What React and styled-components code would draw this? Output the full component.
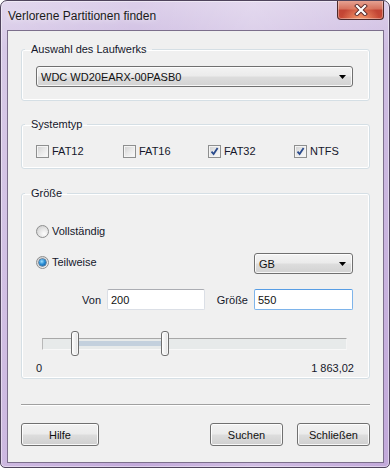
import React from 'react';
import styled, { createGlobalStyle } from 'styled-components';

const GlobalStyle = createGlobalStyle`
  html, body {
    margin: 0;
    padding: 0;
    background: #ffffff;
  }
  body {
    font-family: "Liberation Sans", Arial, sans-serif;
    font-size: 11px;
    color: #15172b;
  }
`;

const Window = styled.div`
  width: 390px;
  height: 468px;
  box-sizing: border-box;
  border: 1px solid #4f445c;
  border-radius: 7px 7px 5px 5px;
  background:
    linear-gradient(90deg, rgba(255,255,255,0.18) 0%, rgba(255,255,255,0) 35%, rgba(255,255,255,0.22) 65%, rgba(255,255,255,0) 100%),
    linear-gradient(180deg, #dccfea 0%, #cfbee2 10%, #c2a9da 100%);
  box-shadow: inset 0 0 0 1px rgba(255, 255, 255, 0.45);
  display: flex;
  flex-direction: column;
  overflow: hidden;
`;

const TitleBar = styled.div`
  height: 29px;
  flex-shrink: 0;
  display: flex;
  align-items: center;
  justify-content: space-between;
  padding-left: 7px;
`;

const Title = styled.div`
  font-size: 12px;
  color: #1a1a1a;
  text-shadow: 0 0 6px rgba(255, 255, 255, 0.9);
`;

const CloseButton = styled.div`
  align-self: flex-start;
  margin-top: -1px;
  margin-right: 5px;
  width: 47px;
  height: 20px;
  box-sizing: border-box;
  border: 1px solid #4d2a2a;
  border-top: none;
  border-radius: 0 0 4px 4px;
  background:
    radial-gradient(ellipse at 50% 110%, rgba(255, 170, 120, 0.9) 0%, rgba(255, 170, 120, 0) 60%),
    linear-gradient(180deg, #e8a898 0%, #d6735f 45%, #c24434 55%, #c84a36 100%);
  box-shadow: inset 0 0 0 1px rgba(255, 255, 255, 0.35);
  display: flex;
  align-items: center;
  justify-content: center;
`;

const Client = styled.div`
  flex: 1;
  margin: 0 5px 4px 6px;
  border: 1px solid #7c6f8c;
  background: #f0f0f0;
  padding: 12px 13px 14px 13px;
  display: flex;
  flex-direction: column;
`;

const Group = styled.fieldset`
  margin: ${p => p.$top || 0}px 0 0 0;
  padding: ${p => p.$pad};
  border: 1px solid #d5dfe5;
  border-radius: 3px;
  box-shadow: inset 0 0 0 1px #ffffff;
  min-width: 0;
`;

const Legend = styled.legend`
  margin-left: -11px;
  padding: 0 5px 0 6px;
  line-height: 13px;
  color: #15172b;
`;

const Combo = styled.div`
  width: ${p => p.$width}px;
  height: 21px;
  box-sizing: border-box;
  border: 1px solid #707070;
  border-radius: 3px;
  background: linear-gradient(180deg, #f3f3f3 0%, #ebebeb 48%, #dddddd 52%, #d2d2d2 100%);
  box-shadow: inset 0 0 0 1px rgba(255, 255, 255, 0.8);
  display: flex;
  align-items: center;
  justify-content: space-between;
  padding: 0 6px 0 4px;
  color: #111;
`;

const Arrow = () => (
  <svg width="7" height="4" viewBox="0 0 7 4">
    <path d="M0 0 H7 L3.5 4 Z" fill="#000" />
  </svg>
);

const CheckRow = styled.div`
  display: grid;
  grid-template-columns: 87px 85px 86px 60px;
`;

const CheckItem = styled.label`
  display: flex;
  align-items: center;
  gap: 3px;
  height: 13px;
  line-height: 13px;
`;

const Box = styled.span`
  width: 13px;
  height: 13px;
  box-sizing: border-box;
  border: 1px solid #8e8f8f;
  background: linear-gradient(135deg, #cfcfcf 0%, #e9e9e9 50%, #fbfbfb 100%);
  box-shadow: inset 0 0 0 1px #f4f4f4;
  display: flex;
  align-items: center;
  justify-content: center;
`;

const Check = () => (
  <svg width="9" height="9" viewBox="0 0 9 9">
    <path d="M1.5 4.6 L3.6 7 L7.6 1" fill="none" stroke="#2a4b8d" strokeWidth="1.8" />
  </svg>
);

const Checkbox = ({ label, checked }) => (
  <CheckItem>
    <Box>{checked && <Check />}</Box>
    {label}
  </CheckItem>
);

const RadioItem = styled.label`
  display: flex;
  align-items: center;
  gap: 3px;
  height: 13px;
  line-height: 13px;
  margin-top: ${p => p.$shift || 0}px;
`;

const Circle = styled.span`
  width: 13px;
  height: 13px;
  box-sizing: border-box;
  border-radius: 50%;
  border: 1px solid #8e8f8f;
  background: radial-gradient(circle at 65% 70%, #fdfdfd 0%, #e6e6e6 45%, #c8c8c8 100%);
  display: flex;
  align-items: center;
  justify-content: center;
`;

const Dot = styled.span`
  width: 7px;
  height: 7px;
  border-radius: 50%;
  background: radial-gradient(circle at 40% 35%, #9fe0ff 0%, #2b8fd6 45%, #0c4a85 100%);
  box-shadow: 0 0 0 0.5px #0b3560;
`;

const Radio = ({ label, checked, shift }) => (
  <RadioItem $shift={shift}>
    <Circle>{checked && <Dot />}</Circle>
    {label}
  </RadioItem>
);

const Row = styled.div`
  display: flex;
  justify-content: space-between;
  align-items: flex-start;
  margin-top: ${p => p.$top || 0}px;
`;

const Fields = styled.div`
  display: grid;
  grid-template-columns: 71px 98px 49px 99px;
  align-items: center;
  margin-top: 15px;
`;

const FieldLabel = styled.span`
  text-align: right;
  padding-right: 6px;
`;

const Input = styled.div`
  height: 21px;
  box-sizing: border-box;
  background: #fff;
  border: 1px solid ${p => (p.$focus ? '#7eb4ea' : '#dbdfe6')};
  border-top-color: ${p => (p.$focus ? '#569de5' : '#abadb3')};
  border-radius: 2px;
  display: flex;
  align-items: center;
  padding-left: 3px;
  color: #111;
`;

const Slider = styled.div`
  position: relative;
  height: 25px;
  margin: 21px 6px 0 6px;
`;

const Track = styled.div`
  position: absolute;
  left: 0;
  right: 0;
  top: 7px;
  height: 12px;
  box-sizing: border-box;
  background: #e7eaea;
  border-top: 1px solid #a8a8a8;
  border-left: 1px solid #b8b8b8;
  border-bottom: 1px solid #f8f8f8;
  border-right: 1px solid #f4f4f4;
`;

const Range = styled.div`
  position: absolute;
  top: 2px;
  height: 5px;
  background: #c3d0dd;
`;

const Thumb = styled.div`
  position: absolute;
  top: 0;
  width: 8px;
  height: 25px;
  box-sizing: border-box;
  margin-left: -4px;
  border: 1px solid #6f6f6f;
  border-radius: 3px;
  background: linear-gradient(90deg, #fdfdfd 0%, #eeeeee 60%, #dadada 100%);
  box-shadow: inset 0 0 0 1px rgba(255, 255, 255, 0.7);
`;

const Scale = styled.div`
  display: flex;
  justify-content: space-between;
  margin-top: 6px;
  line-height: 13px;
  margin-right: -1px;
`;

const Separator = styled.div`
  margin-top: 25px;
  height: 1px;
  background: #a0a0a0;
  border-bottom: 1px solid #ffffff;
`;

const Buttons = styled.div`
  display: flex;
  margin-top: 17px;
  gap: 14px;
`;

const Button = styled.div`
  width: ${p => p.$width}px;
  height: 23px;
  box-sizing: border-box;
  margin-left: ${p => (p.$push ? 'auto' : '0')};
  border: 1px solid #707070;
  border-radius: 3px;
  background: linear-gradient(180deg, #f2f2f2 0%, #ebebeb 48%, #dddddd 52%, #cfcfcf 100%);
  box-shadow: inset 0 0 0 1px rgba(255, 255, 255, 0.85);
  display: flex;
  align-items: center;
  justify-content: center;
  color: #111;
`;

const TOTAL = 1863.02;
const FROM = 200;
const SIZE = 550;
const TRACK = 305;

export default function App() {
  const a = (FROM / TOTAL) * TRACK;
  const b = ((FROM + SIZE) / TOTAL) * TRACK;
  return (
    <>
      <GlobalStyle />
      <Window>
        <TitleBar>
          <Title>Verlorene Partitionen finden</Title>
          <CloseButton>
            <svg width="14" height="12" viewBox="0 0 14 12">
              <path d="M3 2 L11 10 M11 2 L3 10" stroke="#5a2a2a" strokeWidth="4" strokeLinecap="square" />
              <path d="M3 2 L11 10 M11 2 L3 10" stroke="#ffffff" strokeWidth="2.2" strokeLinecap="square" />
            </svg>
          </CloseButton>
        </TitleBar>
        <Client>
          <Group $pad="10px 16px 13px 14px">
            <Legend>Auswahl des Laufwerks</Legend>
            <Combo $width={317}>
              WDC WD20EARX-00PASB0
              <Arrow />
            </Combo>
          </Group>

          <Group $top={17} $pad="14px 16px 10px 14px">
            <Legend>Systemtyp</Legend>
            <CheckRow>
              <Checkbox label="FAT12" />
              <Checkbox label="FAT16" />
              <Checkbox label="FAT32" checked />
              <Checkbox label="NTFS" checked />
            </CheckRow>
          </Group>

          <Group $top={18} $pad="25px 16px 3px 14px">
            <Legend>Größe</Legend>
            <Radio label="Vollständig" />
            <Row $top={15}>
              <Radio label="Teilweise" checked shift={3} />
              <Combo $width={99}>
                GB
                <Arrow />
              </Combo>
            </Row>
            <Fields>
              <FieldLabel>Von</FieldLabel>
              <Input>200</Input>
              <FieldLabel>Größe</FieldLabel>
              <Input $focus>550</Input>
            </Fields>
            <Slider>
              <Track>
                <Range style={{ left: a, width: b - a }} />
              </Track>
              <Thumb style={{ left: a }} />
              <Thumb style={{ left: b }} />
            </Slider>
            <Scale>
              <span>0</span>
              <span>1 863,02</span>
            </Scale>
          </Group>

          <Separator />
          <Buttons>
            <Button $width={78}>Hilfe</Button>
            <Button $width={73} $push>Suchen</Button>
            <Button $width={73}>Schließen</Button>
          </Buttons>
        </Client>
      </Window>
    </>
  );
}
